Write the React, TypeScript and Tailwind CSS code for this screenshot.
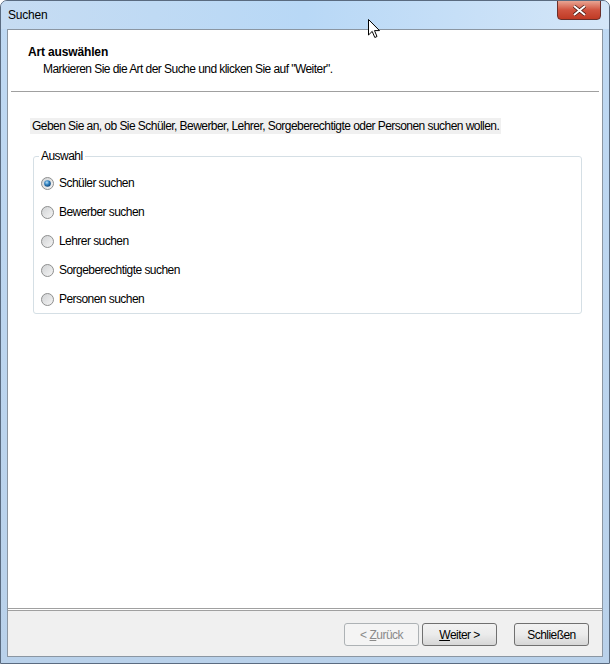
import React from "react";

const OPTIONS = [
  "Schüler suchen",
  "Bewerber suchen",
  "Lehrer suchen",
  "Sorgeberechtigte suchen",
  "Personen suchen",
];

function Radio({ checked }: { checked?: boolean }) {
  return (
    <svg width="13" height="13" viewBox="0 0 13 13" className="shrink-0">
      <defs>
        <linearGradient id="rbg" x1="0" y1="0" x2="1" y2="1">
          <stop offset="0" stopColor="#cfd1d3" />
          <stop offset="1" stopColor="#f6f6f6" />
        </linearGradient>
        <radialGradient id="rdot" cx="0.4" cy="0.35" r="0.7">
          <stop offset="0" stopColor="#b7e0f7" />
          <stop offset="0.5" stopColor="#2d7fbf" />
          <stop offset="1" stopColor="#0f3f6e" />
        </radialGradient>
      </defs>
      <circle cx="6.5" cy="6.5" r="6" fill="url(#rbg)" stroke="#8e8f8f" />
      {checked && <circle cx="6.5" cy="6.5" r="3.3" fill="url(#rdot)" />}
    </svg>
  );
}

function Button({
  children,
  disabled,
}: {
  children: React.ReactNode;
  disabled?: boolean;
}) {
  return (
    <div
      className={`flex h-[23px] w-[75px] items-center justify-center rounded-[3px] border text-[12px] ${
        disabled
          ? "border-[#adb2b5] bg-[#f4f4f4] text-[#8a8a8a]"
          : "border-[#707070] bg-gradient-to-b from-[#f2f2f2] via-[#ebebeb] to-[#d6d6d6] text-black"
      }`}
    >
      {children}
    </div>
  );
}

export default function App() {
  return (
    <div
      className="relative flex h-[664px] w-[610px] flex-col overflow-hidden rounded-t-[7px] border border-[#5a6b80] bg-gradient-to-b from-[#bfd9f3] to-[#b9d1ea] tracking-[-0.55px] text-black"
      style={{ fontFamily: '"Liberation Sans", Arial, sans-serif' }}
    >
      {/* title bar */}
      <div className="flex h-[28px] shrink-0 items-center bg-gradient-to-r from-[#c6dcf2] via-[#b8d8f6] to-[#d4e6f8] pl-[7px]">
        <span className="text-[12px] tracking-[-0.2px]">Suchen</span>
      </div>
      <div className="absolute right-[8px] top-[-1px] flex h-[20px] w-[44px] items-center justify-center rounded-b-[4px] border border-[#6b2f2a] bg-gradient-to-b from-[#e8a493] via-[#d0533f] to-[#c03a24]">
        <svg width="13" height="11" viewBox="0 0 13 11">
          <path d="M1 1 L12 10 M12 1 L1 10" stroke="#4a1a14" strokeWidth="3.4" />
          <path d="M1 1 L12 10 M12 1 L1 10" stroke="#ffffff" strokeWidth="2" />
        </svg>
      </div>

      {/* client */}
      <div className="mx-[6px] mb-[6px] flex flex-1 flex-col border border-[#8b96a2] bg-white">
        <div className="flex flex-1 flex-col border-b border-[#a0a0a0] bg-white">
          {/* header */}
          <div className="h-[61px] px-[20px] pt-[14px]">
            <div className="text-[12px] font-bold leading-[16px] tracking-[-0.15px]">Art auswählen</div>
            <div className="pl-[15px] text-[12px] leading-[18px]">
              Markieren Sie die Art der Suche und klicken Sie auf "Weiter".
            </div>
          </div>
          <div className="mx-[3px] h-[2px] border-t border-b border-[#a0a0a0] border-b-white" />

          <div className="pl-[22px] pt-[20px]">
            <span className="bg-[#f0f0f0] px-[2px] py-[1px] text-[12px] leading-[16px]">
              Geben Sie an, ob Sie Schüler, Bewerber, Lehrer, Sorgeberechtigte oder Personen suchen wollen.
            </span>
          </div>

          {/* group box */}
          <div className="relative ml-[25px] mr-[20px] mt-[19px] h-[158px] rounded-[3px] border border-[#d5dfe5]">
            <span className="absolute left-[5px] top-[-9px] bg-white px-[2px] text-[12px] leading-[16px]">
              Auswahl
            </span>
            <div className="flex flex-col gap-[11px] pl-[7px] pt-[17px]">
              {OPTIONS.map((o, i) => (
                <div key={o} className="flex h-[18px] items-center gap-[5px]">
                  <Radio checked={i === 0} />
                  <span className="text-[12px]">{o}</span>
                </div>
              ))}
            </div>
          </div>
        </div>
        <div className="h-[1px] bg-white" />
        {/* button strip */}
        <div className="flex h-[46px] shrink-0 items-center justify-end border-t border-[#a0a0a0] bg-[#f0f0f0] pr-[13px]">
          <div className="flex items-center pt-[2px]">
            <Button disabled>
              &lt; <span className="ml-[3px] underline">Z</span>urück
            </Button>
            <div className="ml-[3px]">
              <Button>
                <span className="underline">W</span>eiter &gt;
              </Button>
            </div>
            <div className="ml-[17px]">
              <Button>Schließen</Button>
            </div>
          </div>
        </div>
      </div>

      {/* mouse cursor */}
      <svg
        className="absolute left-[367px] top-[18px]"
        width="13"
        height="20"
        viewBox="0 0 13 20"
      >
        <path
          d="M0.5 0.5 L0.5 16 L4.2 12.4 L6.8 18.5 L9 17.5 L6.5 11.6 L11.5 11.6 Z"
          fill="#ffffff"
          stroke="#000000"
          strokeWidth="1"
          strokeLinejoin="round"
        />
      </svg>
    </div>
  );
}
